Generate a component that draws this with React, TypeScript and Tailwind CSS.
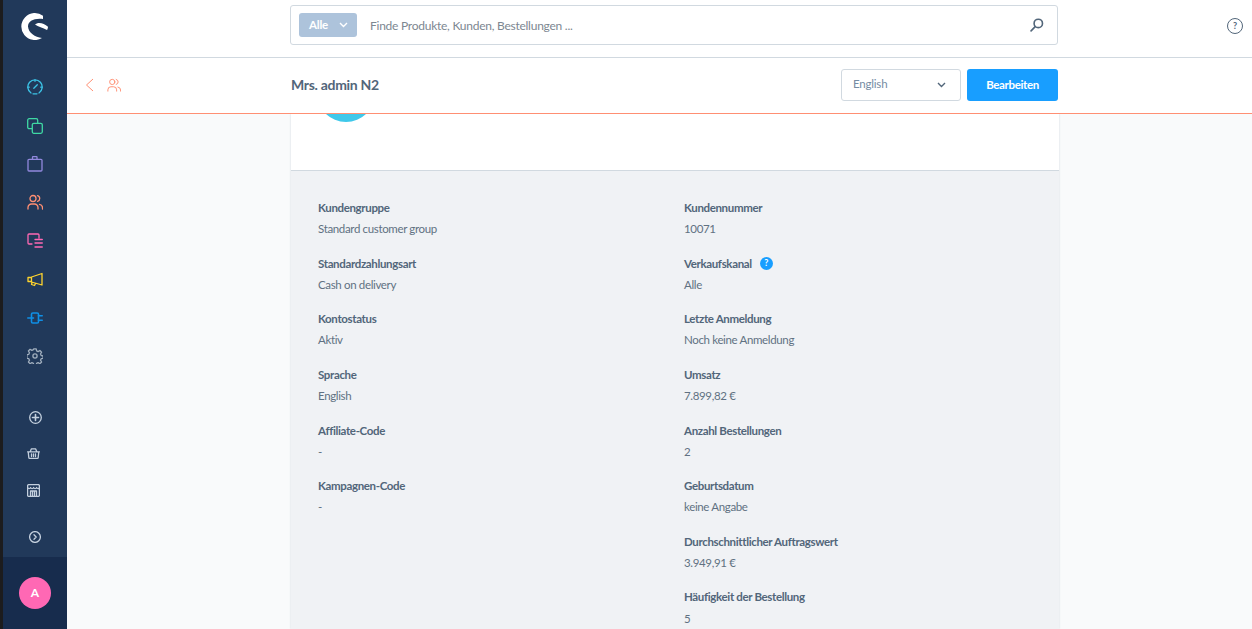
import React from "react";

const F = { fontFamily: '"Lato","Noto Sans",sans-serif' };

function Ico({ c, children, w = 16, h = 16, vb = "0 0 16 16" }: { c: string; children: React.ReactNode; w?: number; h?: number; vb?: string }) {
  return (
    <svg width={w} height={h} viewBox={vb} fill="none" stroke={c} strokeWidth="1.300" strokeLinecap="round" strokeLinejoin="round">
      {children}
    </svg>
  );
}

function NavIcon({ children, h = "h-[38.5px]", cls = "" }: { children: React.ReactNode; h?: string; cls?: string }) {
  return <div className={`flex items-center justify-center w-full shrink-0 ${h} ${cls}`}>{children}</div>;
}

function Field({ label, value, help }: { label: string; value: string; help?: boolean }) {
  return (
    <div className="h-[55.67px]">
      <div className="flex items-center h-[21px] text-[11.5px] tracking-[-0.35px] font-bold text-[#52667a]">
        {label}
        {help && (
          <span className="ml-[8px] w-[13px] h-[13px] rounded-full bg-[#189eff] text-white text-[9px] font-bold flex items-center justify-center tracking-normal">?</span>
        )}
      </div>
      <div className="h-[21px] leading-[21px] text-[11.5px] tracking-[-0.35px] text-[#607182]">{value}</div>
    </div>
  );
}

const left = [
  ["Kundengruppe", "Standard customer group"],
  ["Standardzahlungsart", "Cash on delivery"],
  ["Kontostatus", "Aktiv"],
  ["Sprache", "English"],
  ["Affiliate-Code", "-"],
  ["Kampagnen-Code", "-"],
];
const right = [
  ["Kundennummer", "10071"],
  ["Verkaufskanal", "Alle"],
  ["Letzte Anmeldung", "Noch keine Anmeldung"],
  ["Umsatz", "7.899,82 €"],
  ["Anzahl Bestellungen", "2"],
  ["Geburtsdatum", "keine Angabe"],
  ["Durchschnittlicher Auftragswert", "3.949,91 €"],
  ["Häufigkeit der Bestellung", "5"],
];

const Users = () => (
  <>
    <circle cx="6" cy="4.500" r="3" />
    <path d="M1 15v-1.500a3.500 3.500 0 0 1 3.500-3.500h3a3.500 3.500 0 0 1 3.500 3.500V15M10.500 1.600a3 3 0 0 1 0 5.800M12.500 10.300a3.500 3.500 0 0 1 3 3.400V15" />
  </>
);

export default function App() {
  return (
    <div className="flex w-[1252px] h-[629px] overflow-hidden bg-[#f9fafb]" style={F}>
      <div className="w-[3px] shrink-0 bg-[#1c1c1e]" />
      <aside className="w-[64px] shrink-0 flex flex-col bg-[#21395a]">
        <div className="h-[68px] shrink-0 flex items-center justify-center pb-[15px] pr-[1px]">
          <svg width="27" height="27" viewBox="0 0 27 27">
            <path fill="#fff" d="M22 2.800A13.500 13.500 0 1 0 21 25C14 24 7.500 20 7 13.500 7 8 13 5 22 6Z" />
            <path fill="#fff" d="M14 11.500C17 8.500 23 10 27 13.800 27 15 26.500 16.500 26 17 22 14.500 17 14 14 11.500Z" />
          </svg>
        </div>
        <NavIcon>
          <Ico c="#3cc3e6">
            <path d="M4 14A7.200 7.200 0 1 1 12 14" />
            <path d="M6 14.800h4M6.800 9.300 10.300 5.800M8 1v1.300M1 8.200h1.300M13.700 8.200H15" />
          </Ico>
        </NavIcon>
        <NavIcon>
          <Ico c="#3fd9a4">
            <rect x="0.700" y="0.700" width="10" height="10" rx="1.500" />
            <rect x="5.300" y="5.300" width="10" height="10" rx="1.500" fill="#21395a" />
          </Ico>
        </NavIcon>
        <NavIcon>
          <Ico c="#9188dd">
            <path d="M2 3.300h12a1 1 0 0 1 1 1V14a1 1 0 0 1-1 1H2a1 1 0 0 1-1-1V4.300a1 1 0 0 1 1-1ZM5.500 3.300V1.200a.5.5 0 0 1 .5-.5h3.500a.5.5 0 0 1 .5.5v2.100" />
          </Ico>
        </NavIcon>
        <NavIcon cls="pb-[1px]">
          <Ico c="#ff8f73">
            <Users />
          </Ico>
        </NavIcon>
        <NavIcon>
          <Ico c="#ff68b4">
            <path d="M5 11H2a1 1 0 0 1-1-1V2a1 1 0 0 1 1-1h9a1 1 0 0 1 1 1v3M8 6.500h7.300M8 10h7.300M8 14h7.300" />
          </Ico>
        </NavIcon>
        <NavIcon>
          <Ico c="#ffd42e">
            <path d="M4.500 5 15 1.500v11.500L4.500 10ZM1 5.500h3.500V9.500H1ZM5 10.500l-.5 2 3 1 1-2" />
          </Ico>
        </NavIcon>
        <NavIcon>
          <Ico c="#0f8fe6">
            <rect x="4.500" y="3" width="7" height="10" rx="1.300" strokeWidth="1.600" />
            <path d="M0.800 8H6.500M11.500 5.700h3.700M11.500 10.300h3.700" strokeWidth="1.600" />
          </Ico>
        </NavIcon>
        <NavIcon cls="pb-[1px]">
          <Ico c="#a0aebd">
            <path d="M6.800 0.900h2.400l.4 2 1.500.7 1.800-1.100 1.700 1.700-1.100 1.800.7 1.500 1.900.4v2.400l-1.900.4-.7 1.500 1.100 1.800-1.700 1.700-1.800-1.100-1.500.7-.4 1.900H6.800l-.4-1.900-1.500-.7-1.800 1.100-1.700-1.700 1.100-1.800-.7-1.500-1.900-.4V6.700l1.900-.4.7-1.500-1.100-1.800 1.700-1.700 1.800 1.100 1.500-.7Z" />
            <circle cx="8" cy="8" r="2.100" />
          </Ico>
        </NavIcon>
        <div className="h-[22.5px] shrink-0" />
        <NavIcon h="h-[37px]">
          <Ico c="#c4d0de" w={13} h={13} vb="0 0 13 13">
            <circle cx="6.500" cy="6.500" r="5.800" strokeWidth="1.300" />
            <path d="M6.500 3.500v6M3.500 6.500h6" strokeWidth="1.600" />
          </Ico>
        </NavIcon>
        <NavIcon h="h-[36px]">
          <div className="pr-[3px]">
            <Ico c="#c4d0de" w={13} h={11} vb="0 0 13 11">
              <path d="M.6 3.800h11.800M1.200 3.800l.6 5.600a.9.900 0 0 0 .9.900h7.600a.9.900 0 0 0 .9-.9l.6-5.600M3.200 3.800 4.300.9h4.400l1.100 2.900M4.500 5.800v2.700M6.500 5.800v2.700M8.500 5.800v2.700" />
            </Ico>
          </div>
        </NavIcon>
        <NavIcon h="h-[37px]">
          <div className="pr-[3px]">
            <Ico c="#c4d0de" w={13} h={13} vb="0 0 13 13">
              <rect x=".6" y=".6" width="11.800" height="11.800" rx="1.200" />
              <path d="M.6 3.500c1 1.500 2 1.500 3 0 1 1.500 2 1.500 3 0 1 1.500 2 1.500 3 0 1 1.500 2 1.500 3.200 0M3.500 12.300V7h6v5.300M5.500 7v5.300M7.500 7v5.300" />
            </Ico>
          </div>
        </NavIcon>
        <NavIcon h="h-[40px]" cls="mt-[8.5px]">
          <Ico c="#c4d0de" w={12} h={12} vb="0 0 12 12">
            <circle cx="6" cy="6" r="5.400" />
            <path d="M5 3.800 7.200 6 5 8.200" strokeWidth="1.300" />
          </Ico>
        </NavIcon>
        <div className="flex-1 flex items-center justify-center bg-[#172c4d]">
          <div className="w-[32px] h-[32px] rounded-full bg-[#ff68b4] text-white flex items-center justify-center text-[12px] font-bold">A</div>
        </div>
      </aside>

      <main className="flex-1 flex flex-col min-w-0">
        <header className="h-[58px] shrink-0 bg-white border-b border-[#d1d9e0] flex items-center">
          <div className="ml-[223px] w-[768px] h-[40px] -mt-[7px] border border-[#d1d9e0] rounded-[3px] bg-white flex items-center">
            <div className="ml-[8px] w-[58px] h-[24px] rounded-[3px] bg-[#adc3db] text-white text-[11.5px] tracking-[-0.2px] font-bold flex items-center pl-[10px]">
              Alle
              <svg className="ml-[11px]" width="9" height="6" viewBox="0 0 9 6" fill="none" stroke="#fff" strokeWidth="1.400"><path d="M1 1l3.500 3.500L8 1" /></svg>
            </div>
            <div className="ml-[13px] pt-[1px] text-[12px] tracking-[-0.25px] text-[#7d8791] flex-1">Finde Produkte, Kunden, Bestellungen ...</div>
            <svg className="mr-[13px]" width="14" height="14" viewBox="0 0 13 13" fill="none" stroke="#52667a" strokeWidth="1.500" strokeLinecap="round"><circle cx="7.700" cy="5" r="3.900" /><path d="M4.800 8 1 12" /></svg>
          </div>
          <div className="ml-[169px] -mt-[5px] w-[16px] h-[16px] rounded-full border-[1.500px] border-[#52667a] text-[#52667a] text-[9px] font-bold flex items-center justify-center">?</div>
        </header>
        <div className="h-[56px] shrink-0 bg-white border-b border-[#ff8f73] flex items-center pb-[2px]">
          <svg className="ml-[18px]" width="9" height="14" viewBox="0 0 9 14" fill="none" stroke="#ff8f73" strokeWidth="1"><path d="M8 1 1.500 7 8 13" /></svg>
          <svg className="ml-[13px]" width="14" height="14" viewBox="0 0 16 16" fill="none" stroke="#ff8f73" strokeWidth="1.100" strokeLinecap="round"><Users /></svg>
          <div className="ml-[170px] text-[14px] tracking-[-0.3px] font-bold text-[#52667a] w-[550px]">Mrs. admin N2</div>
          <div className="w-[120px] h-[32px] border border-[#d1d9e0] rounded-[3px] flex items-center justify-between pl-[11px] pr-[14px] text-[11.5px] tracking-[-0.2px] text-[#758ca3] pb-[2px]">
            English
            <svg width="9" height="6" viewBox="0 0 9 6" fill="none" stroke="#52667a" strokeWidth="1.400" className="mt-[3px]"><path d="M1 1l3.500 3.500L8 1" /></svg>
          </div>
          <div className="ml-[6px] w-[91px] h-[32px] rounded-[3px] bg-[#189eff] text-white text-[11.5px] tracking-[-0.35px] font-bold flex items-center justify-center">Bearbeiten</div>
        </div>
        <div className="flex-1 overflow-hidden">
          <div className="ml-[224px] w-[768px] h-full shadow-[0_0_2px_rgba(120,138,155,0.3)]">
            <div className="h-[57px] bg-white border-b border-[#d1d9e0] overflow-hidden">
              <div className="ml-[26px] -mt-[50px] w-[58px] h-[58px] rounded-full bg-[#3fc8ea]" />
            </div>
            <div className="h-full bg-[#f0f2f5] pt-[26px] pl-[27px] flex">
              <div className="w-[366px]">
                {left.map(([l, v]) => <Field key={l} label={l} value={v} />)}
              </div>
              <div className="flex-1">
                {right.map(([l, v]) => <Field key={l} label={l} value={v} help={l === "Verkaufskanal"} />)}
              </div>
            </div>
          </div>
        </div>
      </main>
    </div>
  );
}
